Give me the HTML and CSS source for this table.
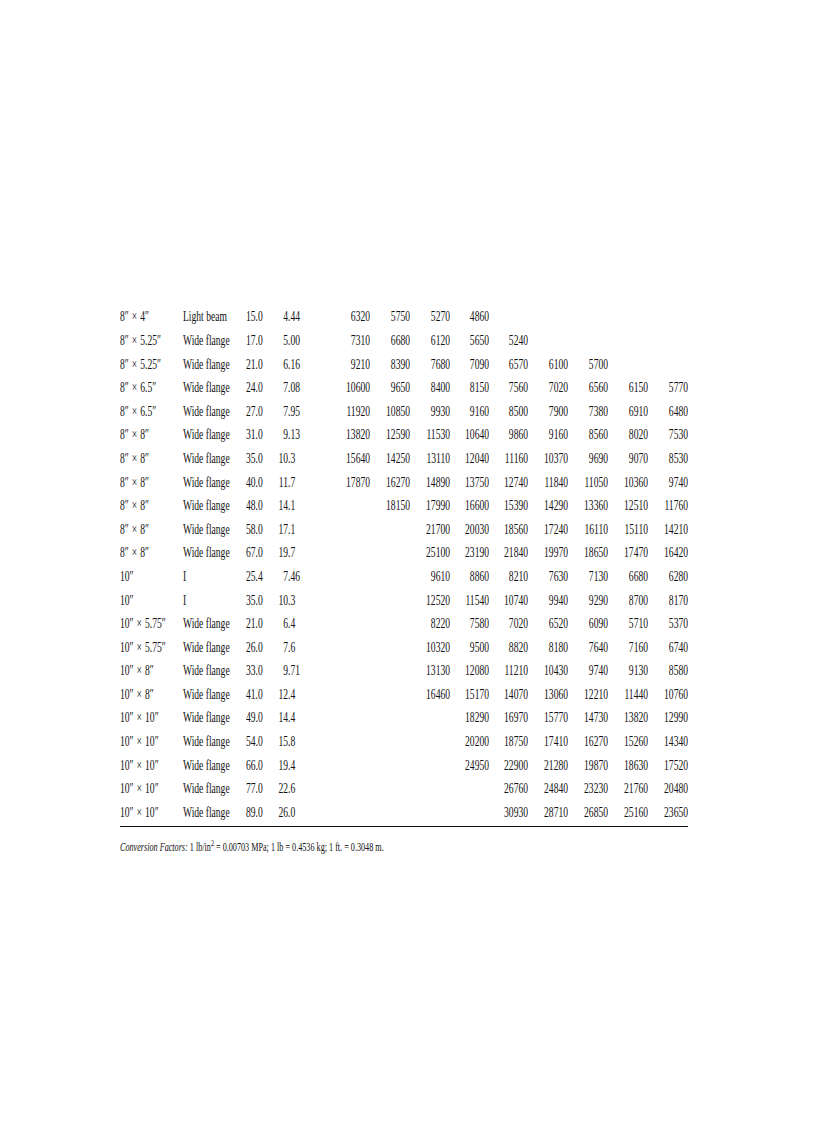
FILE: index.html
```html
<!DOCTYPE html>
<html lang="en">
<head>
<meta charset="utf-8">
<title>Beam table</title>
<link rel="stylesheet" href="styles.css">
</head>
<body>
<div class="page">
  <div class="table">
    <div class="row"><span class="sz">8″ × 4″</span><span class="ty">Light beam</span><span class="wt">15.0</span><span class="ar"><span class="ip">4</span><span class="fp">.44</span></span><span class="n">6320</span><span class="n">5750</span><span class="n">5270</span><span class="n">4860</span><span class="n"></span><span class="n"></span><span class="n"></span><span class="n"></span><span class="n"></span></div>
    <div class="row"><span class="sz">8″ × 5.25″</span><span class="ty">Wide flange</span><span class="wt">17.0</span><span class="ar"><span class="ip">5</span><span class="fp">.00</span></span><span class="n">7310</span><span class="n">6680</span><span class="n">6120</span><span class="n">5650</span><span class="n">5240</span><span class="n"></span><span class="n"></span><span class="n"></span><span class="n"></span></div>
    <div class="row"><span class="sz">8″ × 5.25″</span><span class="ty">Wide flange</span><span class="wt">21.0</span><span class="ar"><span class="ip">6</span><span class="fp">.16</span></span><span class="n">9210</span><span class="n">8390</span><span class="n">7680</span><span class="n">7090</span><span class="n">6570</span><span class="n">6100</span><span class="n">5700</span><span class="n"></span><span class="n"></span></div>
    <div class="row"><span class="sz">8″ × 6.5″</span><span class="ty">Wide flange</span><span class="wt">24.0</span><span class="ar"><span class="ip">7</span><span class="fp">.08</span></span><span class="n">10600</span><span class="n">9650</span><span class="n">8400</span><span class="n">8150</span><span class="n">7560</span><span class="n">7020</span><span class="n">6560</span><span class="n">6150</span><span class="n">5770</span></div>
    <div class="row"><span class="sz">8″ × 6.5″</span><span class="ty">Wide flange</span><span class="wt">27.0</span><span class="ar"><span class="ip">7</span><span class="fp">.95</span></span><span class="n">11920</span><span class="n">10850</span><span class="n">9930</span><span class="n">9160</span><span class="n">8500</span><span class="n">7900</span><span class="n">7380</span><span class="n">6910</span><span class="n">6480</span></div>
    <div class="row"><span class="sz">8″ × 8″</span><span class="ty">Wide flange</span><span class="wt">31.0</span><span class="ar"><span class="ip">9</span><span class="fp">.13</span></span><span class="n">13820</span><span class="n">12590</span><span class="n">11530</span><span class="n">10640</span><span class="n">9860</span><span class="n">9160</span><span class="n">8560</span><span class="n">8020</span><span class="n">7530</span></div>
    <div class="row"><span class="sz">8″ × 8″</span><span class="ty">Wide flange</span><span class="wt">35.0</span><span class="ar"><span class="ip">10</span><span class="fp">.3</span></span><span class="n">15640</span><span class="n">14250</span><span class="n">13110</span><span class="n">12040</span><span class="n">11160</span><span class="n">10370</span><span class="n">9690</span><span class="n">9070</span><span class="n">8530</span></div>
    <div class="row"><span class="sz">8″ × 8″</span><span class="ty">Wide flange</span><span class="wt">40.0</span><span class="ar"><span class="ip">11</span><span class="fp">.7</span></span><span class="n">17870</span><span class="n">16270</span><span class="n">14890</span><span class="n">13750</span><span class="n">12740</span><span class="n">11840</span><span class="n">11050</span><span class="n">10360</span><span class="n">9740</span></div>
    <div class="row"><span class="sz">8″ × 8″</span><span class="ty">Wide flange</span><span class="wt">48.0</span><span class="ar"><span class="ip">14</span><span class="fp">.1</span></span><span class="n"></span><span class="n">18150</span><span class="n">17990</span><span class="n">16600</span><span class="n">15390</span><span class="n">14290</span><span class="n">13360</span><span class="n">12510</span><span class="n">11760</span></div>
    <div class="row"><span class="sz">8″ × 8″</span><span class="ty">Wide flange</span><span class="wt">58.0</span><span class="ar"><span class="ip">17</span><span class="fp">.1</span></span><span class="n"></span><span class="n"></span><span class="n">21700</span><span class="n">20030</span><span class="n">18560</span><span class="n">17240</span><span class="n">16110</span><span class="n">15110</span><span class="n">14210</span></div>
    <div class="row"><span class="sz">8″ × 8″</span><span class="ty">Wide flange</span><span class="wt">67.0</span><span class="ar"><span class="ip">19</span><span class="fp">.7</span></span><span class="n"></span><span class="n"></span><span class="n">25100</span><span class="n">23190</span><span class="n">21840</span><span class="n">19970</span><span class="n">18650</span><span class="n">17470</span><span class="n">16420</span></div>
    <div class="row"><span class="sz">10″</span><span class="ty">I</span><span class="wt">25.4</span><span class="ar"><span class="ip">7</span><span class="fp">.46</span></span><span class="n"></span><span class="n"></span><span class="n">9610</span><span class="n">8860</span><span class="n">8210</span><span class="n">7630</span><span class="n">7130</span><span class="n">6680</span><span class="n">6280</span></div>
    <div class="row"><span class="sz">10″</span><span class="ty">I</span><span class="wt">35.0</span><span class="ar"><span class="ip">10</span><span class="fp">.3</span></span><span class="n"></span><span class="n"></span><span class="n">12520</span><span class="n">11540</span><span class="n">10740</span><span class="n">9940</span><span class="n">9290</span><span class="n">8700</span><span class="n">8170</span></div>
    <div class="row"><span class="sz">10″ × 5.75″</span><span class="ty">Wide flange</span><span class="wt">21.0</span><span class="ar"><span class="ip">6</span><span class="fp">.4</span></span><span class="n"></span><span class="n"></span><span class="n">8220</span><span class="n">7580</span><span class="n">7020</span><span class="n">6520</span><span class="n">6090</span><span class="n">5710</span><span class="n">5370</span></div>
    <div class="row"><span class="sz">10″ × 5.75″</span><span class="ty">Wide flange</span><span class="wt">26.0</span><span class="ar"><span class="ip">7</span><span class="fp">.6</span></span><span class="n"></span><span class="n"></span><span class="n">10320</span><span class="n">9500</span><span class="n">8820</span><span class="n">8180</span><span class="n">7640</span><span class="n">7160</span><span class="n">6740</span></div>
    <div class="row"><span class="sz">10″ × 8″</span><span class="ty">Wide flange</span><span class="wt">33.0</span><span class="ar"><span class="ip">9</span><span class="fp">.71</span></span><span class="n"></span><span class="n"></span><span class="n">13130</span><span class="n">12080</span><span class="n">11210</span><span class="n">10430</span><span class="n">9740</span><span class="n">9130</span><span class="n">8580</span></div>
    <div class="row"><span class="sz">10″ × 8″</span><span class="ty">Wide flange</span><span class="wt">41.0</span><span class="ar"><span class="ip">12</span><span class="fp">.4</span></span><span class="n"></span><span class="n"></span><span class="n">16460</span><span class="n">15170</span><span class="n">14070</span><span class="n">13060</span><span class="n">12210</span><span class="n">11440</span><span class="n">10760</span></div>
    <div class="row"><span class="sz">10″ × 10″</span><span class="ty">Wide flange</span><span class="wt">49.0</span><span class="ar"><span class="ip">14</span><span class="fp">.4</span></span><span class="n"></span><span class="n"></span><span class="n"></span><span class="n">18290</span><span class="n">16970</span><span class="n">15770</span><span class="n">14730</span><span class="n">13820</span><span class="n">12990</span></div>
    <div class="row"><span class="sz">10″ × 10″</span><span class="ty">Wide flange</span><span class="wt">54.0</span><span class="ar"><span class="ip">15</span><span class="fp">.8</span></span><span class="n"></span><span class="n"></span><span class="n"></span><span class="n">20200</span><span class="n">18750</span><span class="n">17410</span><span class="n">16270</span><span class="n">15260</span><span class="n">14340</span></div>
    <div class="row"><span class="sz">10″ × 10″</span><span class="ty">Wide flange</span><span class="wt">66.0</span><span class="ar"><span class="ip">19</span><span class="fp">.4</span></span><span class="n"></span><span class="n"></span><span class="n"></span><span class="n">24950</span><span class="n">22900</span><span class="n">21280</span><span class="n">19870</span><span class="n">18630</span><span class="n">17520</span></div>
    <div class="row"><span class="sz">10″ × 10″</span><span class="ty">Wide flange</span><span class="wt">77.0</span><span class="ar"><span class="ip">22</span><span class="fp">.6</span></span><span class="n"></span><span class="n"></span><span class="n"></span><span class="n"></span><span class="n">26760</span><span class="n">24840</span><span class="n">23230</span><span class="n">21760</span><span class="n">20480</span></div>
    <div class="row"><span class="sz">10″ × 10″</span><span class="ty">Wide flange</span><span class="wt">89.0</span><span class="ar"><span class="ip">26</span><span class="fp">.0</span></span><span class="n"></span><span class="n"></span><span class="n"></span><span class="n"></span><span class="n">30930</span><span class="n">28710</span><span class="n">26850</span><span class="n">25160</span><span class="n">23650</span></div>
  </div>
  <p class="note"><em>Conversion Factors:</em> 1 lb/in<sup>2</sup> = 0.00703 MPa; 1 lb = 0.4536 kg; 1 ft. = 0.3048 m.</p>
</div>
</body>
</html>
```

FILE: styles.css
```css
html, body {
  margin: 0;
  padding: 0;
  background: #ffffff;
}

.page {
  padding: 305.4px 0 0 120px;
  width: 568px;
  font-family: "Liberation Serif", "Times New Roman", serif;
  color: #111111;
}

.table {
  border-bottom: 1.8px solid #111111;
  padding-bottom: 2px;
}

.row {
  display: grid;
  grid-template-columns: 63px 63px 20px 44px 60px 40px 40px 39px 39px 40px 40px 40px 40px;
  height: 23.6px;
  line-height: 23.6px;
  font-size: 14.5px;
  white-space: nowrap;
}

.row > span {
  display: block;
}

.sz, .ty, .wt {
  transform: scaleX(0.66);
  transform-origin: left center;
}

.sz {
  word-spacing: 1px;
}

.n {
  text-align: right;
  transform: scaleX(0.66);
  transform-origin: right center;
}

.row > .ar {
  display: flex;
}

.ip {
  display: block;
  width: 22px;
  text-align: right;
  transform: scaleX(0.66);
  transform-origin: right center;
}

.fp {
  display: block;
  transform: scaleX(0.66);
  transform-origin: left center;
}

.note {
  margin: 12px 0 0 0;
  font-size: 12px;
  line-height: 16px;
  white-space: nowrap;
  transform: scaleX(0.68);
  transform-origin: left center;
}

.note sup {
  font-size: 9px;
  line-height: 0;
  vertical-align: 5px;
}
```
